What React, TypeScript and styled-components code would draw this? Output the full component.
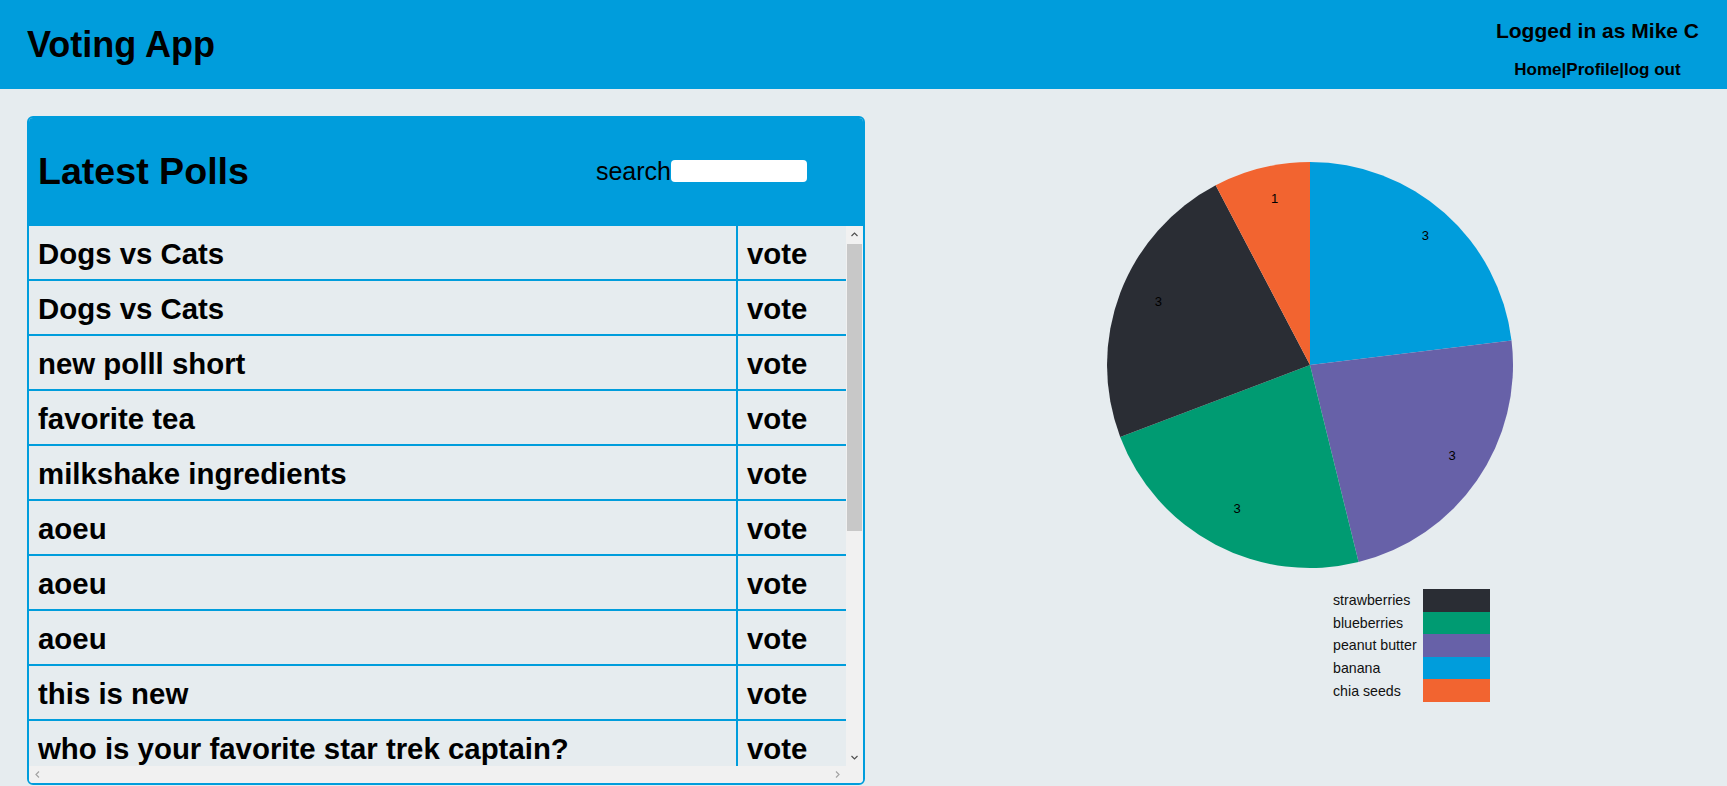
import React from "react";
import styled, { createGlobalStyle } from "styled-components";

const BLUE = "#009DDC";
const BG = "#e6ecef";

const Global = createGlobalStyle`
  html, body { margin: 0; padding: 0; background: ${BG}; }
  body { font-family: "Liberation Sans", Arial, sans-serif; color: #000; overflow: hidden; }
  * { box-sizing: border-box; }
`;

const Header = styled.header`
  height: 89px;
  background: ${BLUE};
  display: flex;
  justify-content: space-between;
  align-items: flex-start;
  padding: 0 28px 0 27px;
`;

const AppTitle = styled.h1`
  margin: 0;
  font-size: 36px;
  font-weight: bold;
  line-height: 42px;
  margin-top: 24px;
`;

const UserBox = styled.div`
  display: flex;
  flex-direction: column;
  align-items: center;
  padding-top: 19px;
`;

const LoggedIn = styled.div`
  font-size: 21px;
  font-weight: bold;
  line-height: 24px;
`;

const NavLinks = styled.nav`
  margin-top: 17px;
  font-size: 17px;
  font-weight: bold;
  line-height: 20px;
`;

const NavLink = styled.a`
  color: #000;
  text-decoration: none;
`;

const Main = styled.main`
  display: flex;
  align-items: flex-start;
  padding: 27px 0 0 27px;
`;

const Panel = styled.section`
  width: 838px;
  height: 669px;
  border: 2px solid ${BLUE};
  border-radius: 6px;
  display: flex;
  flex-direction: column;
  overflow: hidden;
  flex-shrink: 0;
`;

const PanelHeader = styled.div`
  height: 108px;
  flex-shrink: 0;
  background: ${BLUE};
  display: flex;
  align-items: center;
  justify-content: space-between;
  padding: 0 56px 0 9px;
`;

const PanelTitle = styled.h2`
  margin: 0;
  font-size: 37.6px;
  font-weight: bold;
  line-height: 44px;
  margin-top: -2px;
`;

const SearchBox = styled.label`
  display: flex;
  align-items: center;
  font-size: 25px;
  margin-top: -2px;
`;

const SearchInput = styled.input`
  width: 136px;
  height: 22px;
  border: none;
  border-radius: 4px;
  background: #fff;
  outline: none;
  padding: 0 4px;
`;

const ScrollArea = styled.div`
  flex: 1;
  min-height: 0;
  display: grid;
  grid-template-columns: 1fr 17px;
  grid-template-rows: 1fr 17px;
`;

const ListViewport = styled.div`
  overflow: hidden;
  min-height: 0;
`;

const VBar = styled.div`
  background: #f1f1f1;
  display: flex;
  flex-direction: column;
  align-items: center;
`;

const HBar = styled.div`
  background: #f1f1f1;
  display: flex;
  align-items: center;
  justify-content: space-between;
`;

const Corner = styled.div`
  background: #f1f1f1;
`;

const ArrowButton = styled.div<{ $muted?: boolean }>`
  width: 17px;
  height: 17px;
  flex-shrink: 0;
  display: flex;
  align-items: center;
  justify-content: center;
  color: ${(p) => (p.$muted ? "#a3a3a3" : "#505050")};
`;

const VTrack = styled.div`
  flex: 1;
  width: 100%;
  padding: 1px 1px 0 1px;
`;

const Thumb = styled.div`
  height: 287px;
  width: 100%;
  background: #c8c8c8;
`;

const Row = styled.div`
  display: grid;
  grid-template-columns: 1fr 110px;
  height: 55px;
  border-bottom: 2px solid ${BLUE};
`;

const Cell = styled.div<{ $divider?: boolean }>`
  display: flex;
  align-items: center;
  padding: 2px 0 0 9px;
  font-size: 29.4px;
  font-weight: bold;
  white-space: nowrap;
  border-left: ${(p) => (p.$divider ? `2px solid ${BLUE}` : "none")};
`;

const ChartColumn = styled.div`
  flex: 1;
  display: flex;
  flex-direction: column;
  align-items: flex-start;
`;

const PieSvg = styled.svg`
  display: block;
  margin: 39px 0 0 235px;
`;

const Legend = styled.div`
  margin: 14px 0 0 468px;
  display: grid;
  grid-template-columns: 90px 67px;
  grid-auto-rows: 22.6px;
  font-size: 14.2px;
  color: #111;
`;

const LegendLabel = styled.div`
  display: flex;
  align-items: center;
`;

const Swatch = styled.div<{ $color: string }>`
  background: ${(p) => p.$color};
`;

const Chevron: React.FC<{ dir: "up" | "down" | "left" | "right" }> = ({ dir }) => {
  const d = {
    up: "M1.5 6 L4.5 3 L7.5 6",
    down: "M1.5 3 L4.5 6 L7.5 3",
    left: "M6 1.5 L3 4.5 L6 7.5",
    right: "M3 1.5 L6 4.5 L3 7.5",
  }[dir];
  return (
    <svg width="9" height="9" viewBox="0 0 9 9">
      <path d={d} fill="none" stroke="currentColor" strokeWidth="1.2" />
    </svg>
  );
};

const polls = [
  "Dogs vs Cats",
  "Dogs vs Cats",
  "new polll short",
  "favorite tea",
  "milkshake ingredients",
  "aoeu",
  "aoeu",
  "aoeu",
  "this is new",
  "who is your favorite star trek captain?",
  "best programming language",
  "favorite color",
  "pizza toppings",
  "test poll",
  "coffee or tea",
  "best movie",
  "weekend plans",
];

const slices = [
  { label: "banana", value: 3, color: "#009DDC" },
  { label: "peanut butter", value: 3, color: "#6761A8" },
  { label: "blueberries", value: 3, color: "#009B72" },
  { label: "strawberries", value: 3, color: "#2A2D34" },
  { label: "chia seeds", value: 1, color: "#F26430" },
];

const legendOrder = ["strawberries", "blueberries", "peanut butter", "banana", "chia seeds"];

const C = 210;
const R = 203;
const LR = 167;

function pt(angle: number, r: number) {
  return [C + r * Math.sin(angle), C - r * Math.cos(angle)];
}

const PieChart: React.FC = () => {
  const total = slices.reduce((s, d) => s + d.value, 0);
  let a0 = 0;
  return (
    <PieSvg width={420} height={420} viewBox="0 0 420 420">
      {slices.map((s) => {
        const a1 = a0 + (s.value / total) * Math.PI * 2;
        const [x0, y0] = pt(a0, R);
        const [x1, y1] = pt(a1, R);
        const large = a1 - a0 > Math.PI ? 1 : 0;
        const mid = (a0 + a1) / 2;
        const [lx, ly] = pt(mid, LR);
        a0 = a1;
        return (
          <g key={s.label}>
            <path
              d={`M${C},${C} L${x0},${y0} A${R},${R} 0 ${large} 1 ${x1},${y1} Z`}
              fill={s.color}
            />
            <text
              x={lx + 1}
              y={ly}
              textAnchor="start"
              fontSize={13}
              fontFamily="Liberation Sans, Arial, sans-serif"
              fill="#000"
            >
              {s.value}
            </text>
          </g>
        );
      })}
    </PieSvg>
  );
};

export default function App() {
  return (
    <>
      <Global />
      <Header>
        <AppTitle>Voting App</AppTitle>
        <UserBox>
          <LoggedIn>Logged in as Mike C</LoggedIn>
          <NavLinks>
            <NavLink href="#">Home</NavLink>|<NavLink href="#">Profile</NavLink>|
            <NavLink href="#">log out</NavLink>
          </NavLinks>
        </UserBox>
      </Header>
      <Main>
        <Panel>
          <PanelHeader>
            <PanelTitle>Latest Polls</PanelTitle>
            <SearchBox>
              search
              <SearchInput type="text" />
            </SearchBox>
          </PanelHeader>
          <ScrollArea>
            <ListViewport>
              {polls.map((p, i) => (
                <Row key={i}>
                  <Cell>{p}</Cell>
                  <Cell $divider>vote</Cell>
                </Row>
              ))}
            </ListViewport>
            <VBar>
              <ArrowButton>
                <Chevron dir="up" />
              </ArrowButton>
              <VTrack>
                <Thumb />
              </VTrack>
              <ArrowButton>
                <Chevron dir="down" />
              </ArrowButton>
            </VBar>
            <HBar>
              <ArrowButton $muted>
                <Chevron dir="left" />
              </ArrowButton>
              <ArrowButton $muted>
                <Chevron dir="right" />
              </ArrowButton>
            </HBar>
            <Corner />
          </ScrollArea>
        </Panel>
        <ChartColumn>
          <PieChart />
          <Legend>
            {legendOrder.map((name) => {
              const s = slices.find((d) => d.label === name)!;
              return (
                <React.Fragment key={name}>
                  <LegendLabel>{name}</LegendLabel>
                  <Swatch $color={s.color} />
                </React.Fragment>
              );
            })}
          </Legend>
        </ChartColumn>
      </Main>
    </>
  );
}
